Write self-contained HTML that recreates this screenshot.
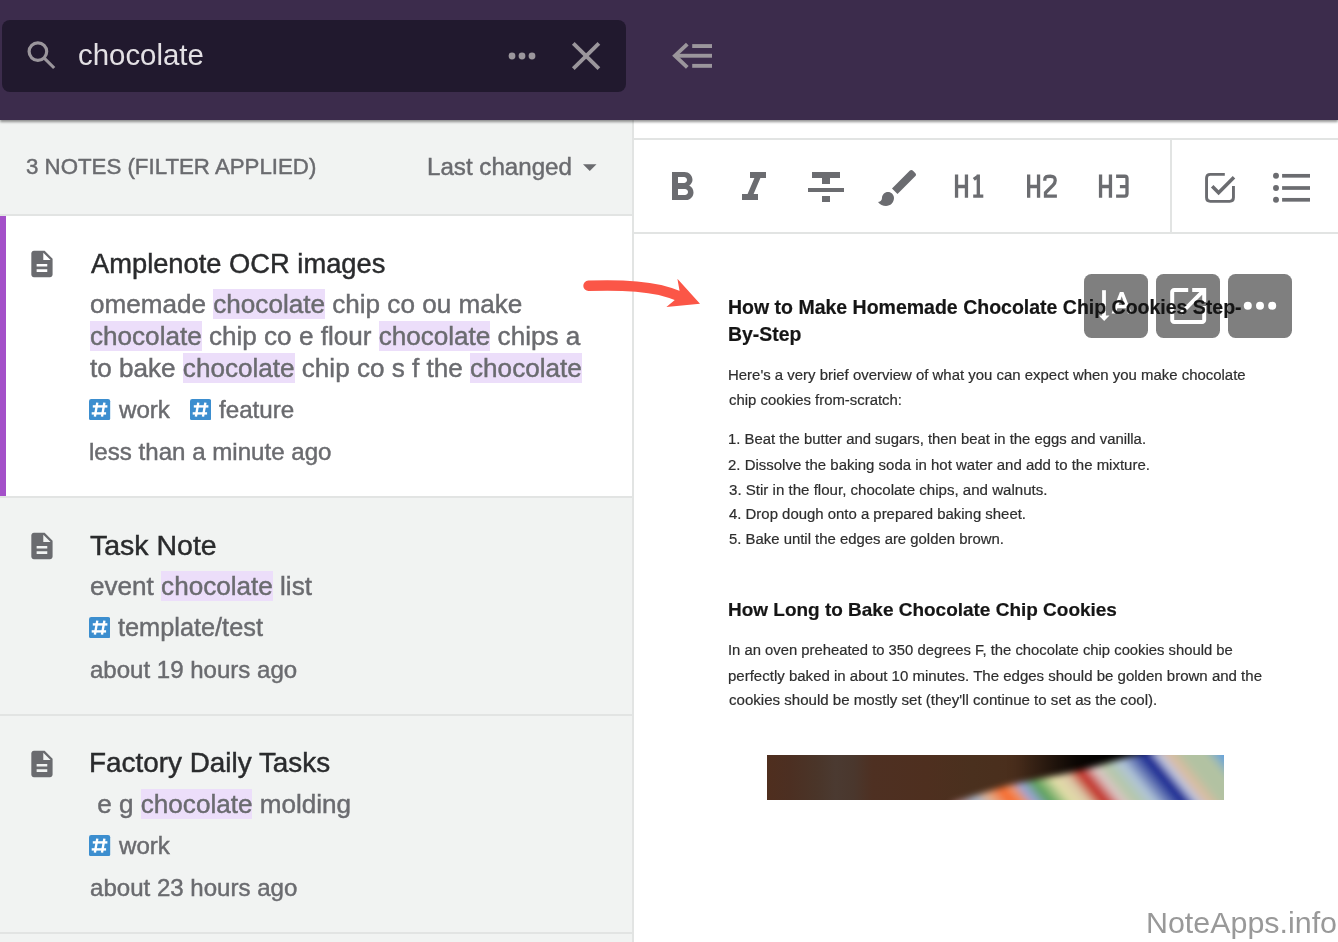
<!DOCTYPE html>
<html><head><meta charset="utf-8"><title>Amplenote search</title>
<style>
html,body{margin:0;padding:0;}
body{width:1338px;height:942px;overflow:hidden;position:relative;background:#fff;font-family:"Liberation Sans",sans-serif;}
.t{position:absolute;white-space:pre;will-change:transform;-webkit-text-stroke:0.45px currentColor;}
#ed .t{-webkit-text-stroke:0.2px currentColor;}
.hl{background:#ecdefa;}
</style></head><body>
<div style="position:absolute;left:0;top:0;width:1338px;height:120px;background:#3c2c4c;box-shadow:0 1.5px 2.5px rgba(0,0,0,0.42);z-index:5"></div><div style="position:absolute;left:2px;top:20px;width:624px;height:72px;background:#21192e;border-radius:8px;z-index:6"></div><svg style="position:absolute;left:0;top:0;z-index:7" width="740" height="120">
<circle cx="37.9" cy="51.6" r="8.8" fill="none" stroke="#9b969c" stroke-width="3.2"/>
<line x1="44" y1="57.8" x2="54.2" y2="68" stroke="#9b969c" stroke-width="3.1"/>
<circle cx="512" cy="56" r="3.4" fill="#9b969c"/><circle cx="522" cy="56" r="3.4" fill="#9b969c"/><circle cx="532" cy="56" r="3.4" fill="#9b969c"/>
<line x1="573.3" y1="43.3" x2="598.9" y2="68.7" stroke="#9b969c" stroke-width="3.8"/>
<line x1="598.9" y1="43.3" x2="573.3" y2="68.7" stroke="#9b969c" stroke-width="3.8"/>
<rect x="692.2" y="44.1" width="19.8" height="3.9" fill="#9b969c"/>
<rect x="675" y="53.8" width="37" height="3.9" fill="#9b969c"/>
<rect x="692.2" y="63.9" width="19.8" height="3.9" fill="#9b969c"/>
<polyline points="687.3,44.1 675,55.7 687.3,67.3" fill="none" stroke="#9b969c" stroke-width="3.9"/>
</svg><div style="z-index:7;position:absolute;left:0;top:0;width:0;height:0"><div class="t" style="left:77.72px;top:40.10px;font-size:29.42px;line-height:29.42px;color:#e3e0e4;font-weight:normal;-webkit-text-stroke:0">chocolate</div>
</div><div style="position:absolute;left:0;top:120px;width:632px;height:822px;background:#f1f3f2"></div><div style="position:absolute;left:632px;top:120px;width:2px;height:822px;background:#e2e4e3"></div><div class="t" style="left:25.91px;top:156.14px;font-size:22.28px;line-height:22.28px;color:#6a6b6f;font-weight:normal;">3 NOTES (FILTER APPLIED)</div>
<div class="t" style="left:427.47px;top:154.56px;font-size:24.15px;line-height:24.15px;color:#6a6b6f;font-weight:normal;">Last changed</div>
<svg style="position:absolute;left:0;top:0" width="632" height="942"><polygon points="583,164.2 596.5,164.2 589.75,170.9" fill="#6a6b6f"/></svg><div style="position:absolute;left:0;top:214px;width:632px;height:2px;background:#e2e4e3"></div><div style="position:absolute;left:0;top:496px;width:632px;height:2px;background:#e2e4e3"></div><div style="position:absolute;left:0;top:714px;width:632px;height:2px;background:#e2e4e3"></div><div style="position:absolute;left:0;top:932px;width:632px;height:2px;background:#e2e4e3"></div><div style="position:absolute;left:0;top:216px;width:632px;height:280px;background:#fff"></div><div style="position:absolute;left:0;top:216px;width:6px;height:280px;background:#a450c9"></div><svg style="position:absolute;left:26.08px;top:247.74px" width="31.92" height="31.92" viewBox="0 0 24 24" fill="#6a6b6f"><path d="M14 2H6c-1.1 0-1.99.9-1.99 2L4 20c0 1.1.89 2 1.99 2H18c1.1 0 2-.9 2-2V8l-6-6zm2 16H8v-2h8v2zm0-4H8v-2h8v2zm-3-5V3.5L18.5 9H13z"/></svg>
<div class="t" style="left:90.60px;top:249.78px;font-size:27.31px;line-height:27.31px;color:#2a2b2d;font-weight:normal;">Amplenote OCR images</div>
<div class="t sn" style="left:90.00px;top:290.51px;font-size:26.1px;line-height:26.1px;color:#6a6b6f">omemade <span class="hl">chocolate</span> chip co ou make</div>
<div class="t sn" style="left:90.00px;top:322.51px;font-size:26.1px;line-height:26.1px;color:#6a6b6f"><span class="hl">chocolate</span> chip co e flour <span class="hl">chocolate</span> chips a</div>
<div class="t sn" style="left:90.00px;top:354.51px;font-size:26.1px;line-height:26.1px;color:#6a6b6f">to bake <span class="hl">chocolate</span> chip co s f the <span class="hl">chocolate</span></div>
<svg style="position:absolute;left:89.40px;top:399.10px" width="21.2" height="21.4" viewBox="0 0 21.2 21.4"><rect x="0" y="0" width="21.2" height="21.4" rx="2.2" fill="#3c8ecf"/><g stroke="#fff" stroke-width="2.4" stroke-linecap="butt"><line x1="8.3" y1="3.6" x2="5.9" y2="17.6"/><line x1="15.4" y1="3.6" x2="13" y2="17.6"/><line x1="3.8" y1="7.4" x2="18.4" y2="7.4"/><line x1="2.7" y1="14.4" x2="17.1" y2="14.4"/></g></svg>
<div class="t" style="left:118.90px;top:397.58px;font-size:24.12px;line-height:24.12px;color:#6a6b6f;font-weight:normal;">work</div>
<svg style="position:absolute;left:189.50px;top:399.10px" width="21.2" height="21.4" viewBox="0 0 21.2 21.4"><rect x="0" y="0" width="21.2" height="21.4" rx="2.2" fill="#3c8ecf"/><g stroke="#fff" stroke-width="2.4" stroke-linecap="butt"><line x1="8.3" y1="3.6" x2="5.9" y2="17.6"/><line x1="15.4" y1="3.6" x2="13" y2="17.6"/><line x1="3.8" y1="7.4" x2="18.4" y2="7.4"/><line x1="2.7" y1="14.4" x2="17.1" y2="14.4"/></g></svg>
<div class="t" style="left:218.64px;top:397.51px;font-size:24.2px;line-height:24.2px;color:#6a6b6f;font-weight:normal;">feature</div>
<div class="t" style="left:89.23px;top:440.40px;font-size:24.1px;line-height:24.1px;color:#6a6b6f;font-weight:normal;">less than a minute ago</div>
<svg style="position:absolute;left:26.08px;top:529.74px" width="31.92" height="31.92" viewBox="0 0 24 24" fill="#6a6b6f"><path d="M14 2H6c-1.1 0-1.99.9-1.99 2L4 20c0 1.1.89 2 1.99 2H18c1.1 0 2-.9 2-2V8l-6-6zm2 16H8v-2h8v2zm0-4H8v-2h8v2zm-3-5V3.5L18.5 9H13z"/></svg>
<div class="t" style="left:90.13px;top:530.78px;font-size:28.49px;line-height:28.49px;color:#2a2b2d;font-weight:normal;">Task Note</div>
<div class="t sn" style="left:90.00px;top:572.51px;font-size:26.1px;line-height:26.1px;color:#6a6b6f">event <span class="hl">chocolate</span> list</div>
<svg style="position:absolute;left:89.20px;top:617.10px" width="21.2" height="21.4" viewBox="0 0 21.2 21.4"><rect x="0" y="0" width="21.2" height="21.4" rx="2.2" fill="#3c8ecf"/><g stroke="#fff" stroke-width="2.4" stroke-linecap="butt"><line x1="8.3" y1="3.6" x2="5.9" y2="17.6"/><line x1="15.4" y1="3.6" x2="13" y2="17.6"/><line x1="3.8" y1="7.4" x2="18.4" y2="7.4"/><line x1="2.7" y1="14.4" x2="17.1" y2="14.4"/></g></svg>
<div class="t" style="left:117.82px;top:614.57px;font-size:25.32px;line-height:25.32px;color:#6a6b6f;font-weight:normal;">template/test</div>
<div class="t" style="left:89.84px;top:658.45px;font-size:24.04px;line-height:24.04px;color:#6a6b6f;font-weight:normal;">about 19 hours ago</div>
<svg style="position:absolute;left:26.08px;top:747.74px" width="31.92" height="31.92" viewBox="0 0 24 24" fill="#6a6b6f"><path d="M14 2H6c-1.1 0-1.99.9-1.99 2L4 20c0 1.1.89 2 1.99 2H18c1.1 0 2-.9 2-2V8l-6-6zm2 16H8v-2h8v2zm0-4H8v-2h8v2zm-3-5V3.5L18.5 9H13z"/></svg>
<div class="t" style="left:88.67px;top:749.29px;font-size:27.89px;line-height:27.89px;color:#2a2b2d;font-weight:normal;">Factory Daily Tasks</div>
<div class="t sn" style="left:90.00px;top:790.51px;font-size:26.1px;line-height:26.1px;color:#6a6b6f">&nbsp;e g <span class="hl">chocolate</span> molding</div>
<svg style="position:absolute;left:89.40px;top:835.10px" width="21.2" height="21.4" viewBox="0 0 21.2 21.4"><rect x="0" y="0" width="21.2" height="21.4" rx="2.2" fill="#3c8ecf"/><g stroke="#fff" stroke-width="2.4" stroke-linecap="butt"><line x1="8.3" y1="3.6" x2="5.9" y2="17.6"/><line x1="15.4" y1="3.6" x2="13" y2="17.6"/><line x1="3.8" y1="7.4" x2="18.4" y2="7.4"/><line x1="2.7" y1="14.4" x2="17.1" y2="14.4"/></g></svg>
<div class="t" style="left:118.70px;top:833.58px;font-size:24.12px;line-height:24.12px;color:#6a6b6f;font-weight:normal;">work</div>
<div class="t" style="left:89.84px;top:876.42px;font-size:24.07px;line-height:24.07px;color:#6a6b6f;font-weight:normal;">about 23 hours ago</div>
<div style="position:absolute;left:634px;top:120px;width:704px;height:822px;background:#fff"></div><div style="position:absolute;left:634px;top:138px;width:704px;height:2px;background:#e2e4e3"></div><div style="position:absolute;left:634px;top:232px;width:704px;height:2px;background:#e2e4e3"></div><div style="position:absolute;left:1170px;top:140px;width:2px;height:92px;background:#e2e4e3"></div><svg style="position:absolute;left:657.9px;top:164.2px" width="48" height="48" viewBox="0 0 24 24" fill="#6b6c70"><path d="M15.6 10.79c.97-.67 1.65-1.77 1.65-2.79 0-2.26-1.75-4-4-4H7v14h7.04c2.09 0 3.71-1.7 3.71-3.79 0-1.52-.86-2.82-2.15-3.42zM10 6.5h3c.83 0 1.5.67 1.5 1.5s-.67 1.5-1.5 1.5h-3v-3zm3.5 9H10v-3h3.5c.83 0 1.5.67 1.5 1.5s-.67 1.5-1.5 1.5z"/></svg><svg style="position:absolute;left:730.1px;top:164.2px" width="48" height="48" viewBox="0 0 24 24" fill="#6b6c70"><path d="M10 4v3h2.21l-3.42 8H6v3h8v-3h-2.21l3.42-8H18V4z"/></svg><svg style="position:absolute;left:802.3px;top:164.2px" width="48" height="48" viewBox="0 0 24 24" fill="#6b6c70"><path d="M10 19h4v-3h-4v3zM5 4v3h5v3h4V7h5V4H5zM3 14h18v-2H3v2z"/></svg><svg style="position:absolute;left:874.2px;top:163.9px" width="48" height="48" viewBox="0 0 24 24" fill="#6b6c70"><path d="M7 14c-1.66 0-3 1.34-3 3 0 1.31-1.16 2-2 2 .92 1.22 2.49 2 4 2 2.21 0 4-1.79 4-4 0-1.66-1.34-3-3-3zm13.71-9.37l-1.34-1.34c-.39-.39-1.02-.39-1.41 0L9 12.25 11.75 15l8.96-8.96c.39-.39.39-1.02 0-1.41z"/></svg><svg style="position:absolute;left:0;top:0" width="1338" height="260"><g fill="none" stroke="#6b6c70" stroke-width="3.3"><path d="M956.55,174.6 V197.8 M966.45,174.6 V197.8 M954.9,186.5 H968.1"/><path d="M978.3,174.6 V197.8 M973.1999999999999,196.15 H983.3 M978.3,176 L973.8,179.4"/><path d="M1028.65,174.6 V197.8 M1038.55,174.6 V197.8 M1027,186.5 H1040.2"/><path d="M1044.8000000000002,180.8 V179.6 C1044.8000000000002,176.6 1046.5,176.25 1050.4,176.25 C1054.3000000000002,176.25 1055.2,177.8 1055.2,180.6 C1055.2,182.6 1054.5,183.8 1053.1000000000001,185.2 L1045.5,192.8 V196.15 H1056.9"/><path d="M1100.5500000000002,174.6 V197.8 M1110.45,174.6 V197.8 M1098.9,186.5 H1112.1000000000001"/><path d="M1116.1000000000001,176.25 H1124.9 C1126.5000000000002,176.25 1127.0000000000002,176.9 1127.0000000000002,178.6 V186.6 M1119.9,186.6 H1127.0000000000002 V193.6 C1127.0000000000002,195.4 1126.4,196.15 1124.7,196.15 H1116.1000000000001"/></g></svg><svg style="position:absolute;left:0;top:0" width="1338" height="260">
<path d="M1224.8,174.35 H1210.3 Q1206.55,174.35 1206.55,178.1 V197.6 Q1206.55,201.35 1210.3,201.35 H1229.7 Q1233.45,201.35 1233.45,197.6 V186" fill="none" stroke="#6b6c70" stroke-width="2.9"/>
<polyline points="1212.2,186.2 1218.6,192.8 1234,177.2" fill="none" stroke="#6b6c70" stroke-width="3.5"/>
<g fill="#6b6c70"><circle cx="1276" cy="175.8" r="2.95"/><circle cx="1276" cy="188" r="2.95"/><circle cx="1276" cy="199.8" r="2.95"/>
<rect x="1282.1" y="173.95" width="27.9" height="3.7"/><rect x="1282.1" y="186.15" width="27.9" height="3.7"/><rect x="1282.1" y="197.95" width="27.9" height="3.7"/></g>
</svg><div id="ed" style="position:absolute;left:0;top:0;width:0;height:0;z-index:2"><div class="t" style="left:727.83px;top:297.59px;font-size:19.5px;line-height:19.5px;color:#151515;font-weight:bold;">How to Make Homemade Chocolate Chip Cookies Step-</div>
<div class="t" style="left:727.84px;top:325.28px;font-size:19.4px;line-height:19.4px;color:#151515;font-weight:bold;">By-Step</div>
<div class="t" style="left:727.90px;top:368.34px;font-size:14.95px;line-height:14.95px;color:#2e2e2e;font-weight:normal;">Here's a very brief overview of what you can expect when you make chocolate</div>
<div class="t" style="left:728.50px;top:393.19px;font-size:14.9px;line-height:14.9px;color:#2e2e2e;font-weight:normal;">chip cookies from-scratch:</div>
<div class="t" style="left:727.98px;top:432.11px;font-size:14.87px;line-height:14.87px;color:#2e2e2e;font-weight:normal;">1. Beat the butter and sugars, then beat in the eggs and vanilla.</div>
<div class="t" style="left:728.35px;top:457.12px;font-size:14.98px;line-height:14.98px;color:#2e2e2e;font-weight:normal;">2. Dissolve the baking soda in hot water and add to the mixture.</div>
<div class="t" style="left:728.50px;top:481.93px;font-size:15.09px;line-height:15.09px;color:#2e2e2e;font-weight:normal;">3. Stir in the flour, chocolate chips, and walnuts.</div>
<div class="t" style="left:728.80px;top:507.16px;font-size:14.93px;line-height:14.93px;color:#2e2e2e;font-weight:normal;">4. Drop dough onto a prepared baking sheet.</div>
<div class="t" style="left:728.50px;top:531.79px;font-size:14.9px;line-height:14.9px;color:#2e2e2e;font-weight:normal;">5. Bake until the edges are golden brown.</div>
<div class="t" style="left:727.77px;top:643.05px;font-size:14.82px;line-height:14.82px;color:#2e2e2e;font-weight:normal;">In an oven preheated to 350 degrees F, the chocolate chip cookies should be</div>
<div class="t" style="left:728.12px;top:667.59px;font-size:15.02px;line-height:15.02px;color:#2e2e2e;font-weight:normal;">perfectly baked in about 10 minutes. The edges should be golden brown and the</div>
<div class="t" style="left:728.50px;top:692.24px;font-size:15.07px;line-height:15.07px;color:#2e2e2e;font-weight:normal;">cookies should be mostly set (they'll continue to set as the cool).</div>
<div class="t" style="left:727.87px;top:600.33px;font-size:18.98px;line-height:18.98px;color:#151515;font-weight:bold;">How Long to Bake Chocolate Chip Cookies</div>
</div><svg style="position:absolute;left:767px;top:755px" width="457" height="45" viewBox="0 0 457 45">
<defs>
<linearGradient id="br" x1="0" y1="0" x2="457" y2="0" gradientUnits="userSpaceOnUse">
<stop offset="0" stop-color="#4f2e1e"/><stop offset="0.05" stop-color="#4c2f22"/><stop offset="0.11" stop-color="#4a3529"/><stop offset="0.15" stop-color="#4b3a31"/><stop offset="0.19" stop-color="#4a372d"/><stop offset="0.23" stop-color="#4e3022"/><stop offset="0.35" stop-color="#4e2f1f"/><stop offset="0.45" stop-color="#4a301e"/><stop offset="0.55" stop-color="#4a2e1c"/><stop offset="1" stop-color="#3a2418"/>
</linearGradient>
<linearGradient id="blk" x1="0" y1="0" x2="457" y2="0" gradientUnits="userSpaceOnUse">
<stop offset="0.54" stop-color="#000" stop-opacity="0"/><stop offset="0.68" stop-color="#000" stop-opacity="0.85"/><stop offset="0.78" stop-color="#000" stop-opacity="1"/><stop offset="0.9" stop-color="#000" stop-opacity="0.7"/><stop offset="1" stop-color="#000" stop-opacity="0.2"/>
</linearGradient>
<linearGradient id="blkv" x1="0" y1="0" x2="0" y2="45" gradientUnits="userSpaceOnUse">
<stop offset="0" stop-color="#fff"/><stop offset="0.45" stop-color="#fff"/><stop offset="0.9" stop-color="#000"/>
</linearGradient>
<mask id="mk"><rect width="457" height="45" fill="url(#blkv)"/></mask>
<linearGradient id="sp" gradientUnits="userSpaceOnUse" x1="167" y1="45" x2="363.9" y2="-116.9">
<stop offset="0.0000" stop-color="#4a2e20"/>
<stop offset="0.0636" stop-color="#b08080"/>
<stop offset="0.1273" stop-color="#a8b8cc"/>
<stop offset="0.1727" stop-color="#e0b090"/>
<stop offset="0.2318" stop-color="#f8682a"/>
<stop offset="0.2636" stop-color="#f09060"/>
<stop offset="0.3000" stop-color="#9aa4dc"/>
<stop offset="0.3500" stop-color="#58a058"/>
<stop offset="0.4136" stop-color="#e2dea8"/>
<stop offset="0.4636" stop-color="#dcc8a8"/>
<stop offset="0.5136" stop-color="#c0241c"/>
<stop offset="0.5636" stop-color="#dcc4c4"/>
<stop offset="0.6091" stop-color="#b4c8a8"/>
<stop offset="0.6636" stop-color="#b0c4d8"/>
<stop offset="0.7545" stop-color="#0c1c8c"/>
<stop offset="0.7909" stop-color="#bcc4e0"/>
<stop offset="0.8273" stop-color="#dcbca0"/>
<stop offset="0.8727" stop-color="#b2c2a2"/>
<stop offset="0.9364" stop-color="#b2c2a2"/>
<stop offset="0.9909" stop-color="#60a0e0"/>
</linearGradient>
<filter id="bl" x="-0.2" y="-1" width="1.4" height="3"><feGaussianBlur stdDeviation="3"/></filter>
<filter id="bl2" x="-0.2" y="-1" width="1.4" height="3"><feGaussianBlur stdDeviation="5"/></filter>
<clipPath id="cp"><rect width="457" height="45"/></clipPath>
</defs>
<g clip-path="url(#cp)">
<rect width="457" height="45" fill="url(#br)"/>
<rect x="0" y="-10" width="457" height="55" fill="url(#blk)" mask="url(#mk)" filter="url(#bl2)"/>
<path d="M170,60 L186,47 C205,42 225,35 243,30 C270,24 300,19 323,13 C345,7 360,2 380,-3 L480,-20 L480,60 Z" fill="url(#sp)" filter="url(#bl)"/>
</g>
</svg><svg style="position:absolute;left:1084px;top:274px;z-index:1" width="208" height="64" viewBox="0 0 208 64">
<rect x="0" y="0" width="64" height="64" rx="7.5" fill="rgba(0,0,0,0.5)"/>
<rect x="72" y="0" width="64" height="64" rx="7.5" fill="rgba(0,0,0,0.5)"/>
<rect x="144" y="0" width="64" height="64" rx="7.5" fill="rgba(0,0,0,0.5)"/>
<g fill="#fff">
<rect x="18.1" y="16.2" width="3.8" height="26"/>
<polygon points="14.9,41.4 25.5,41.4 20.2,46.9"/>
<path d="M35.9,18 h3.6 l8.3,21.4 h-3.9 l-1.9,-5.2 h-8.6 l-1.9,5.2 h-3.9 z M34.6,30.9 h6.2 l-3.1,-8.6 z"/>
</g>
<svg x="80.2" y="8" width="48" height="48" viewBox="0 0 24 24" fill="#fff"><path d="M19 19H5V5h7V3H5c-1.11 0-2 .9-2 2v14c0 1.1.89 2 2 2h14c1.1 0 2-.9 2-2v-7h-2v7zM14 3v2h3.59l-9.83 9.83 1.41 1.41L19 6.41V10h2V3h-7z"/></svg>
<g fill="#fff"><circle cx="163.8" cy="31.8" r="4"/><circle cx="176" cy="31.8" r="4"/><circle cx="188.2" cy="31.8" r="4"/></g>
</svg><svg style="position:absolute;left:570px;top:260px;z-index:3" width="150" height="60" viewBox="570 260 150 60">
<path d="M588.5,285.8 C610,285 635,284.5 660,290 C668,292 674,294 680,296.5" fill="none" stroke="#fb5647" stroke-width="10.4" stroke-linecap="round"/>
<polygon points="677.4,278.8 700,303.7 666.4,306.9 676,299 679.5,290.5" fill="#fb5647"/>
</svg><div class="t" style="left:1145.97px;top:907.26px;font-size:30.41px;line-height:30.41px;color:#999999;font-weight:normal;z-index:9;-webkit-text-stroke:0">NoteApps.info</div>

</body></html>
